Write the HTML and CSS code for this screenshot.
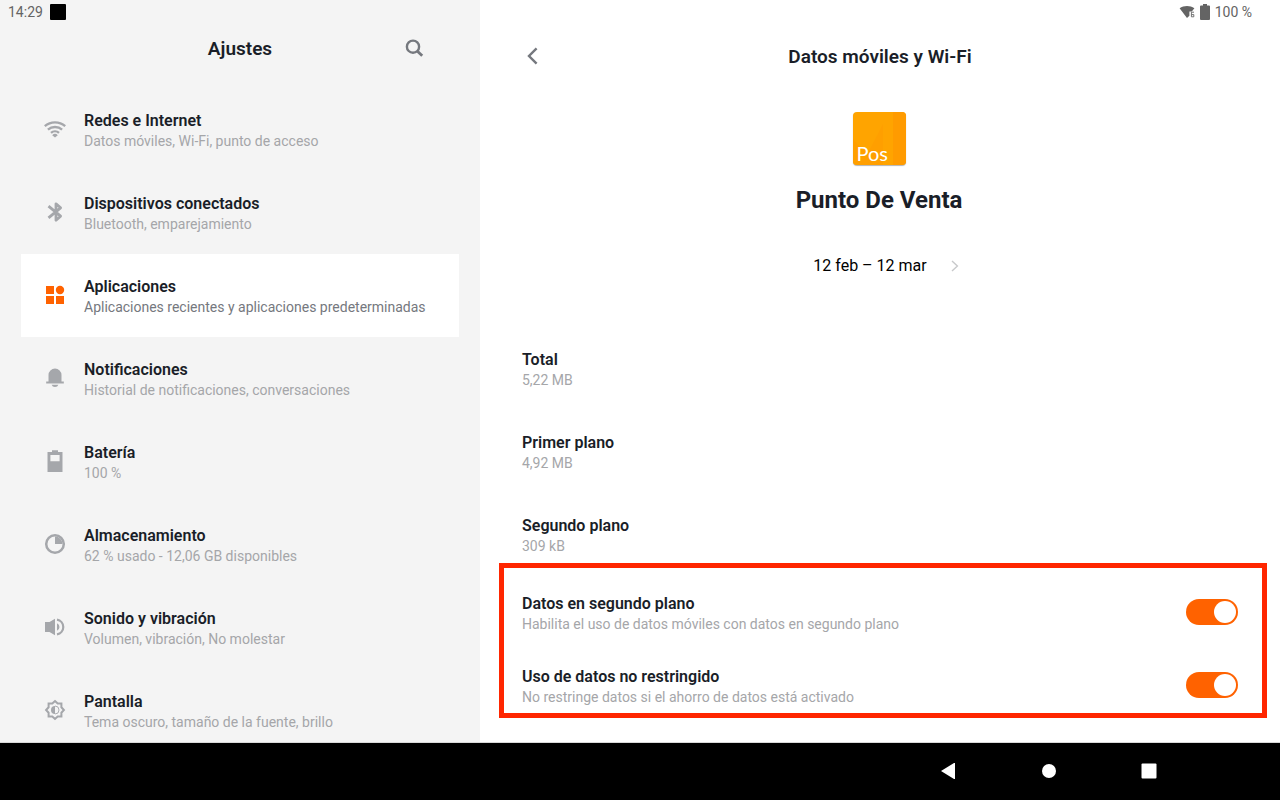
FILE: index.html
```html
<!DOCTYPE html>
<html lang="es">

    <head>
        <meta charset="UTF-8">
        <meta name="viewport" content="width=device-width, initial-scale=1">
        <title>Ajustes</title>
        <link rel="stylesheet" href="styles.css">
    </head>

    <body>
        <div class="panes">

            <aside class="sidebar">
                <div class="status">
                    <span>14:29</span>
                    <span class="status-app"></span>
                </div>

                <header class="sidebar-header">
                    <h1 class="title">Ajustes</h1>
                    <button class="icon-button search" aria-label="Buscar">
                        <svg width="20" height="20" viewBox="0 0 20 20" fill="none" stroke="#75787e" stroke-width="2.4">
                            <circle cx="9" cy="8.7" r="6.1" />
                            <path d="M13.2 13l5 4.8" stroke-width="2.8" />
                        </svg>
                    </button>
                </header>

                <nav class="menu">
                    <a class="menu-item" href="#">
                        <svg class="menu-icon" viewBox="0 0 24 24" fill="none" stroke="currentColor" stroke-width="2.4">
                            <path d="M1.8 9.2a15.5 15.5 0 0 1 20.4 0M4.9 12.6a10.8 10.8 0 0 1 14.2 0M8 15.9a6 6 0 0 1 8 0" />
                            <path d="M9.2 18.2a4 4 0 0 1 5.6 0L12 20.6z" fill="currentColor" stroke="none" />
                        </svg>
                        <span class="text">
                            <span class="name">Redes e Internet</span>
                            <span class="detail">Datos móviles, Wi-Fi, punto de acceso</span>
                        </span>
                    </a>

                    <a class="menu-item" href="#">
                        <svg class="menu-icon" viewBox="0 0 24 24" fill="none" stroke="currentColor" stroke-width="2.8" stroke-linejoin="round">
                            <path d="M5.5 6.2L17.6 16.2 13 20.2V3.8l4.6 4L5.5 17.8" />
                        </svg>
                        <span class="text">
                            <span class="name">Dispositivos conectados</span>
                            <span class="detail">Bluetooth, emparejamiento</span>
                        </span>
                    </a>

                    <a class="menu-item active" href="#">
                        <svg class="menu-icon" viewBox="0 0 24 24" fill="currentColor">
                            <path d="M3 3h8v8H3zM3 13h8v8H3zM13 13h8v8h-8z" />
                            <circle cx="17" cy="7" r="4.2" />
                        </svg>
                        <span class="text">
                            <span class="name">Aplicaciones</span>
                            <span class="detail">Aplicaciones recientes y aplicaciones predeterminadas</span>
                        </span>
                    </a>

                    <a class="menu-item" href="#">
                        <svg class="menu-icon" viewBox="0 0 24 24" fill="currentColor">
                            <path d="M5.5 15.5V9a6.5 6.5 0 0 1 13 0v6.5h2.3v2H3.2v-2zM8.6 18.7h6.8a3.6 3.6 0 0 1-6.8 0z" />
                        </svg>
                        <span class="text">
                            <span class="name">Notificaciones</span>
                            <span class="detail">Historial de notificaciones, conversaciones</span>
                        </span>
                    </a>

                    <a class="menu-item" href="#">
                        <svg class="menu-icon" viewBox="0 0 24 24" fill="currentColor" fill-rule="evenodd">
                            <path d="M4.5 3H9V1.3h6V3h4.5v20h-15zM7.4 6v6.3h9.2V6z" />
                        </svg>
                        <span class="text">
                            <span class="name">Batería</span>
                            <span class="detail">100 %</span>
                        </span>
                    </a>

                    <a class="menu-item" href="#">
                        <svg class="menu-icon" viewBox="0 0 24 24" fill="currentColor">
                            <circle cx="12" cy="12" r="8.8" fill="none" stroke="currentColor" stroke-width="2.5" />
                            <path d="M12 4.5a7.5 7.5 0 0 1 7.5 7.5H12z" />
                        </svg>
                        <span class="text">
                            <span class="name">Almacenamiento</span>
                            <span class="detail">62 % usado - 12,06 GB disponibles</span>
                        </span>
                    </a>

                    <a class="menu-item" href="#">
                        <svg class="menu-icon" viewBox="0 0 24 24" fill="currentColor">
                            <path d="M2 7h4.5L12 3.8v16.4L6.5 17H2z" />
                            <path d="M14 8.3a4 4 0 0 1 0 7.4z" />
                            <path d="M14 4.6a7.5 7.5 0 0 1 0 14.8" fill="none" stroke="currentColor" stroke-width="2.2" />
                        </svg>
                        <span class="text">
                            <span class="name">Sonido y vibración</span>
                            <span class="detail">Volumen, vibración, No molestar</span>
                        </span>
                    </a>

                    <a class="menu-item" href="#">
                        <svg class="menu-icon" viewBox="0 0 24 24" fill="none" stroke="currentColor" stroke-width="2">
                            <path d="M12 3.1l2.7 2.5h3.7v3.7L20.9 12l-2.5 2.7v3.7h-3.7L12 20.9l-2.7-2.5H5.6v-3.7L3.1 12l2.5-2.7V5.6h3.7z" />
                            <path d="M12 8a4 4 0 0 0 0 8z" fill="currentColor" stroke="none" />
                            <path d="M12 8a4 4 0 0 1 0 8" stroke-width="0.9" />
                        </svg>
                        <span class="text">
                            <span class="name">Pantalla</span>
                            <span class="detail">Tema oscuro, tamaño de la fuente, brillo</span>
                        </span>
                    </a>
                </nav>
            </aside>

            <main class="content">
                <div class="status status-right">
                    <svg width="16" height="16" viewBox="0 0 16 16" fill="#646464">
                        <path d="M0.6 4.2C5 1.2 11 1.2 15.4 4.2L12.8 7.4H10.4v4.4L8 14z" />
                        <path d="M15 8.2h-2.6v4.6h2.4v-2.2h-2.2" fill="none" stroke="#646464" stroke-width="0.9" />
                    </svg>
                    <svg width="10" height="16" viewBox="0 0 10 16" fill="#646464">
                        <path d="M1 1.6h2V0h4v1.6h2a1 1 0 0 1 1 1V15a1 1 0 0 1-1 1H1a1 1 0 0 1-1-1V2.6a1 1 0 0 1 1-1z" />
                    </svg>
                    <span>100 %</span>
                </div>

                <header class="content-header">
                    <button class="icon-button back" aria-label="Atrás">
                        <svg width="20" height="20" viewBox="0 0 20 20" fill="none" stroke="#75787e" stroke-width="2.4">
                            <path d="M13.6 2.4L6 10l7.6 7.6" />
                        </svg>
                    </button>
                    <h2 class="title">Datos móviles y Wi-Fi</h2>
                </header>

                <section class="app">
                    <div class="app-icon">
                        <svg width="53" height="53" viewBox="0 0 53 53">
                            <path d="M0 27l14 16 16-31v41H0z" fill="#ff9f00" />
                            <path d="M40 0h13v53H40z" fill="#ff9b00" />
                        </svg>
                        <span class="app-label">Pos</span>
                    </div>
                    <h3 class="app-name">Punto De Venta</h3>
                    <button class="period">
                        <span>12 feb – 12 mar</span>
                        <svg width="8" height="12" viewBox="0 0 8 12" fill="none" stroke="#c8c9cb" stroke-width="1.4">
                            <path d="M1 1l5.4 5L1 11" />
                        </svg>
                    </button>
                </section>

                <dl class="usage">
                    <div class="usage-row">
                        <dt class="name">Total</dt>
                        <dd class="detail">5,22 MB</dd>
                    </div>
                    <div class="usage-row">
                        <dt class="name">Primer plano</dt>
                        <dd class="detail">4,92 MB</dd>
                    </div>
                    <div class="usage-row">
                        <dt class="name">Segundo plano</dt>
                        <dd class="detail">309 kB</dd>
                    </div>
                </dl>

                <section class="switches">
                    <label class="switch-row">
                        <span class="text">
                            <span class="name">Datos en segundo plano</span>
                            <span class="detail">Habilita el uso de datos móviles con datos en segundo plano</span>
                        </span>
                        <input class="switch" type="checkbox" checked>
                    </label>
                    <label class="switch-row">
                        <span class="text">
                            <span class="name">Uso de datos no restringido</span>
                            <span class="detail">No restringe datos si el ahorro de datos está activado</span>
                        </span>
                        <input class="switch" type="checkbox" checked>
                    </label>
                </section>
            </main>

        </div>

        <footer class="navbar">
            <button class="nav-button" aria-label="Atrás">
                <svg width="16" height="16" viewBox="0 0 16 16" fill="#fff">
                    <path d="M0 8l13-8h1v16h-1z" />
                </svg>
            </button>
            <button class="nav-button" aria-label="Inicio">
                <svg width="16" height="16" viewBox="0 0 16 16" fill="#fff">
                    <circle cx="8" cy="8" r="7" />
                </svg>
            </button>
            <button class="nav-button" aria-label="Recientes">
                <svg width="16" height="16" viewBox="0 0 16 16" fill="#fff">
                    <rect x="0.5" y="0.5" width="15" height="15" rx="1" />
                </svg>
            </button>
        </footer>
    </body>

</html>
```

FILE: styles.css
```css
* {
    padding: 0;
    margin: 0;
    box-sizing: border-box;
}

body {
    height: 100vh;
    display: flex;
    flex-direction: column;
    font-family: Roboto, "Liberation Sans", sans-serif;
    color: #1a1e28;
    background-color: #fff;
}

button {
    border: none;
    background: none;
    font: inherit;
    color: inherit;
}

svg {
    display: block;
}

.panes {
    flex: 1;
    min-height: 0;
    display: flex;
}

.sidebar {
    width: 37.5%;
    background-color: #f4f4f4;
    overflow: hidden;
}

.content {
    flex: 1;
    overflow: hidden;
}

/* status bar */
.status {
    height: 24px;
    padding: 0 8px;
    display: flex;
    align-items: center;
    gap: 7px;
    font-size: 14px;
    color: #646464;
}

.status-right {
    justify-content: flex-end;
    gap: 5px;
    padding-right: 28px;
}

.status-app {
    width: 16px;
    height: 16px;
    border-radius: 1px;
    background-color: #000;
}

/* headers */
.sidebar-header,
.content-header {
    position: relative;
    display: flex;
    align-items: center;
    justify-content: center;
}

.sidebar-header {
    height: 48px;
    margin-bottom: 16px;
}

.content-header {
    height: 64px;
}

.title {
    padding-top: 2px;
    font-size: 19px;
    font-weight: 600;
    line-height: 24px;
}

.icon-button {
    position: absolute;
}

.search {
    right: 56px;
}

.back {
    left: 43px;
}

/* list on the left */
.menu-item {
    margin: 0 21px;
    padding: 22px 22px 19px;
    display: flex;
    align-items: center;
    gap: 17px;
    color: #a5a7ab;
    text-decoration: none;
}

.menu-item.active {
    background-color: #fff;
    color: #ff6200;
}

.menu-icon {
    width: 24px;
    height: 24px;
    margin-bottom: 4px;
}

.name,
.detail {
    display: block;
    line-height: 21px;
}

.name {
    font-size: 16px;
    font-weight: 600;
    color: #1a1e28;
}

.detail {
    font-size: 14px;
    color: #a5a6a9;
}

.active .detail {
    color: #75787e;
}

/* app summary */
.app {
    padding: 24px 2px 47px 0;
    display: flex;
    flex-direction: column;
    align-items: center;
}

.app-icon {
    position: relative;
    width: 53px;
    height: 53px;
    border-radius: 4px;
    background-color: #ffa400;
    box-shadow: 0 1px 1px rgba(0, 0, 0, .3);
    overflow: hidden;
}

.app-label {
    position: absolute;
    left: 4px;
    bottom: 0;
    font-family: Lato, sans-serif;
    font-size: 20px;
    line-height: 24px;
    color: #fff;
}

.app-name {
    margin: 19px 0 35px;
    font-size: 24px;
    font-weight: 700;
    line-height: 32px;
}

.period {
    display: flex;
    align-items: center;
    gap: 24px;
    padding-left: 14px;
    font-size: 16px;
    line-height: 30px;
    color: #000;
}

/* data usage */
.usage-row {
    padding: 21px 42px 20px;
}

.switches {
    position: relative;
}

.switches::after {
    content: "";
    position: absolute;
    top: -14px;
    right: 13px;
    bottom: 5px;
    left: 19px;
    border: 5px solid #ff2600;
    pointer-events: none;
}

.switch-row {
    padding: 16px 42px 15px;
    display: flex;
    align-items: center;
    justify-content: space-between;
}

.switch {
    appearance: none;
    width: 52px;
    height: 26px;
    margin-bottom: 4px;
    padding: 2px;
    border-radius: 13px;
    background-color: #a5a7ab;
}

.switch::before {
    content: "";
    display: block;
    width: 22px;
    height: 22px;
    border-radius: 50%;
    background-color: #fff;
}

.switch:checked {
    background-color: #ff6200;
}

.switch:checked::before {
    margin-left: auto;
}

/* system buttons */
.navbar {
    height: 58px;
    padding: 0 81px 2px 0;
    display: flex;
    justify-content: flex-end;
    border-top: 1px solid #d8d8d8;
    background-color: #000;
}

.nav-button {
    width: 100px;
    display: flex;
    align-items: center;
    justify-content: center;
}
```
